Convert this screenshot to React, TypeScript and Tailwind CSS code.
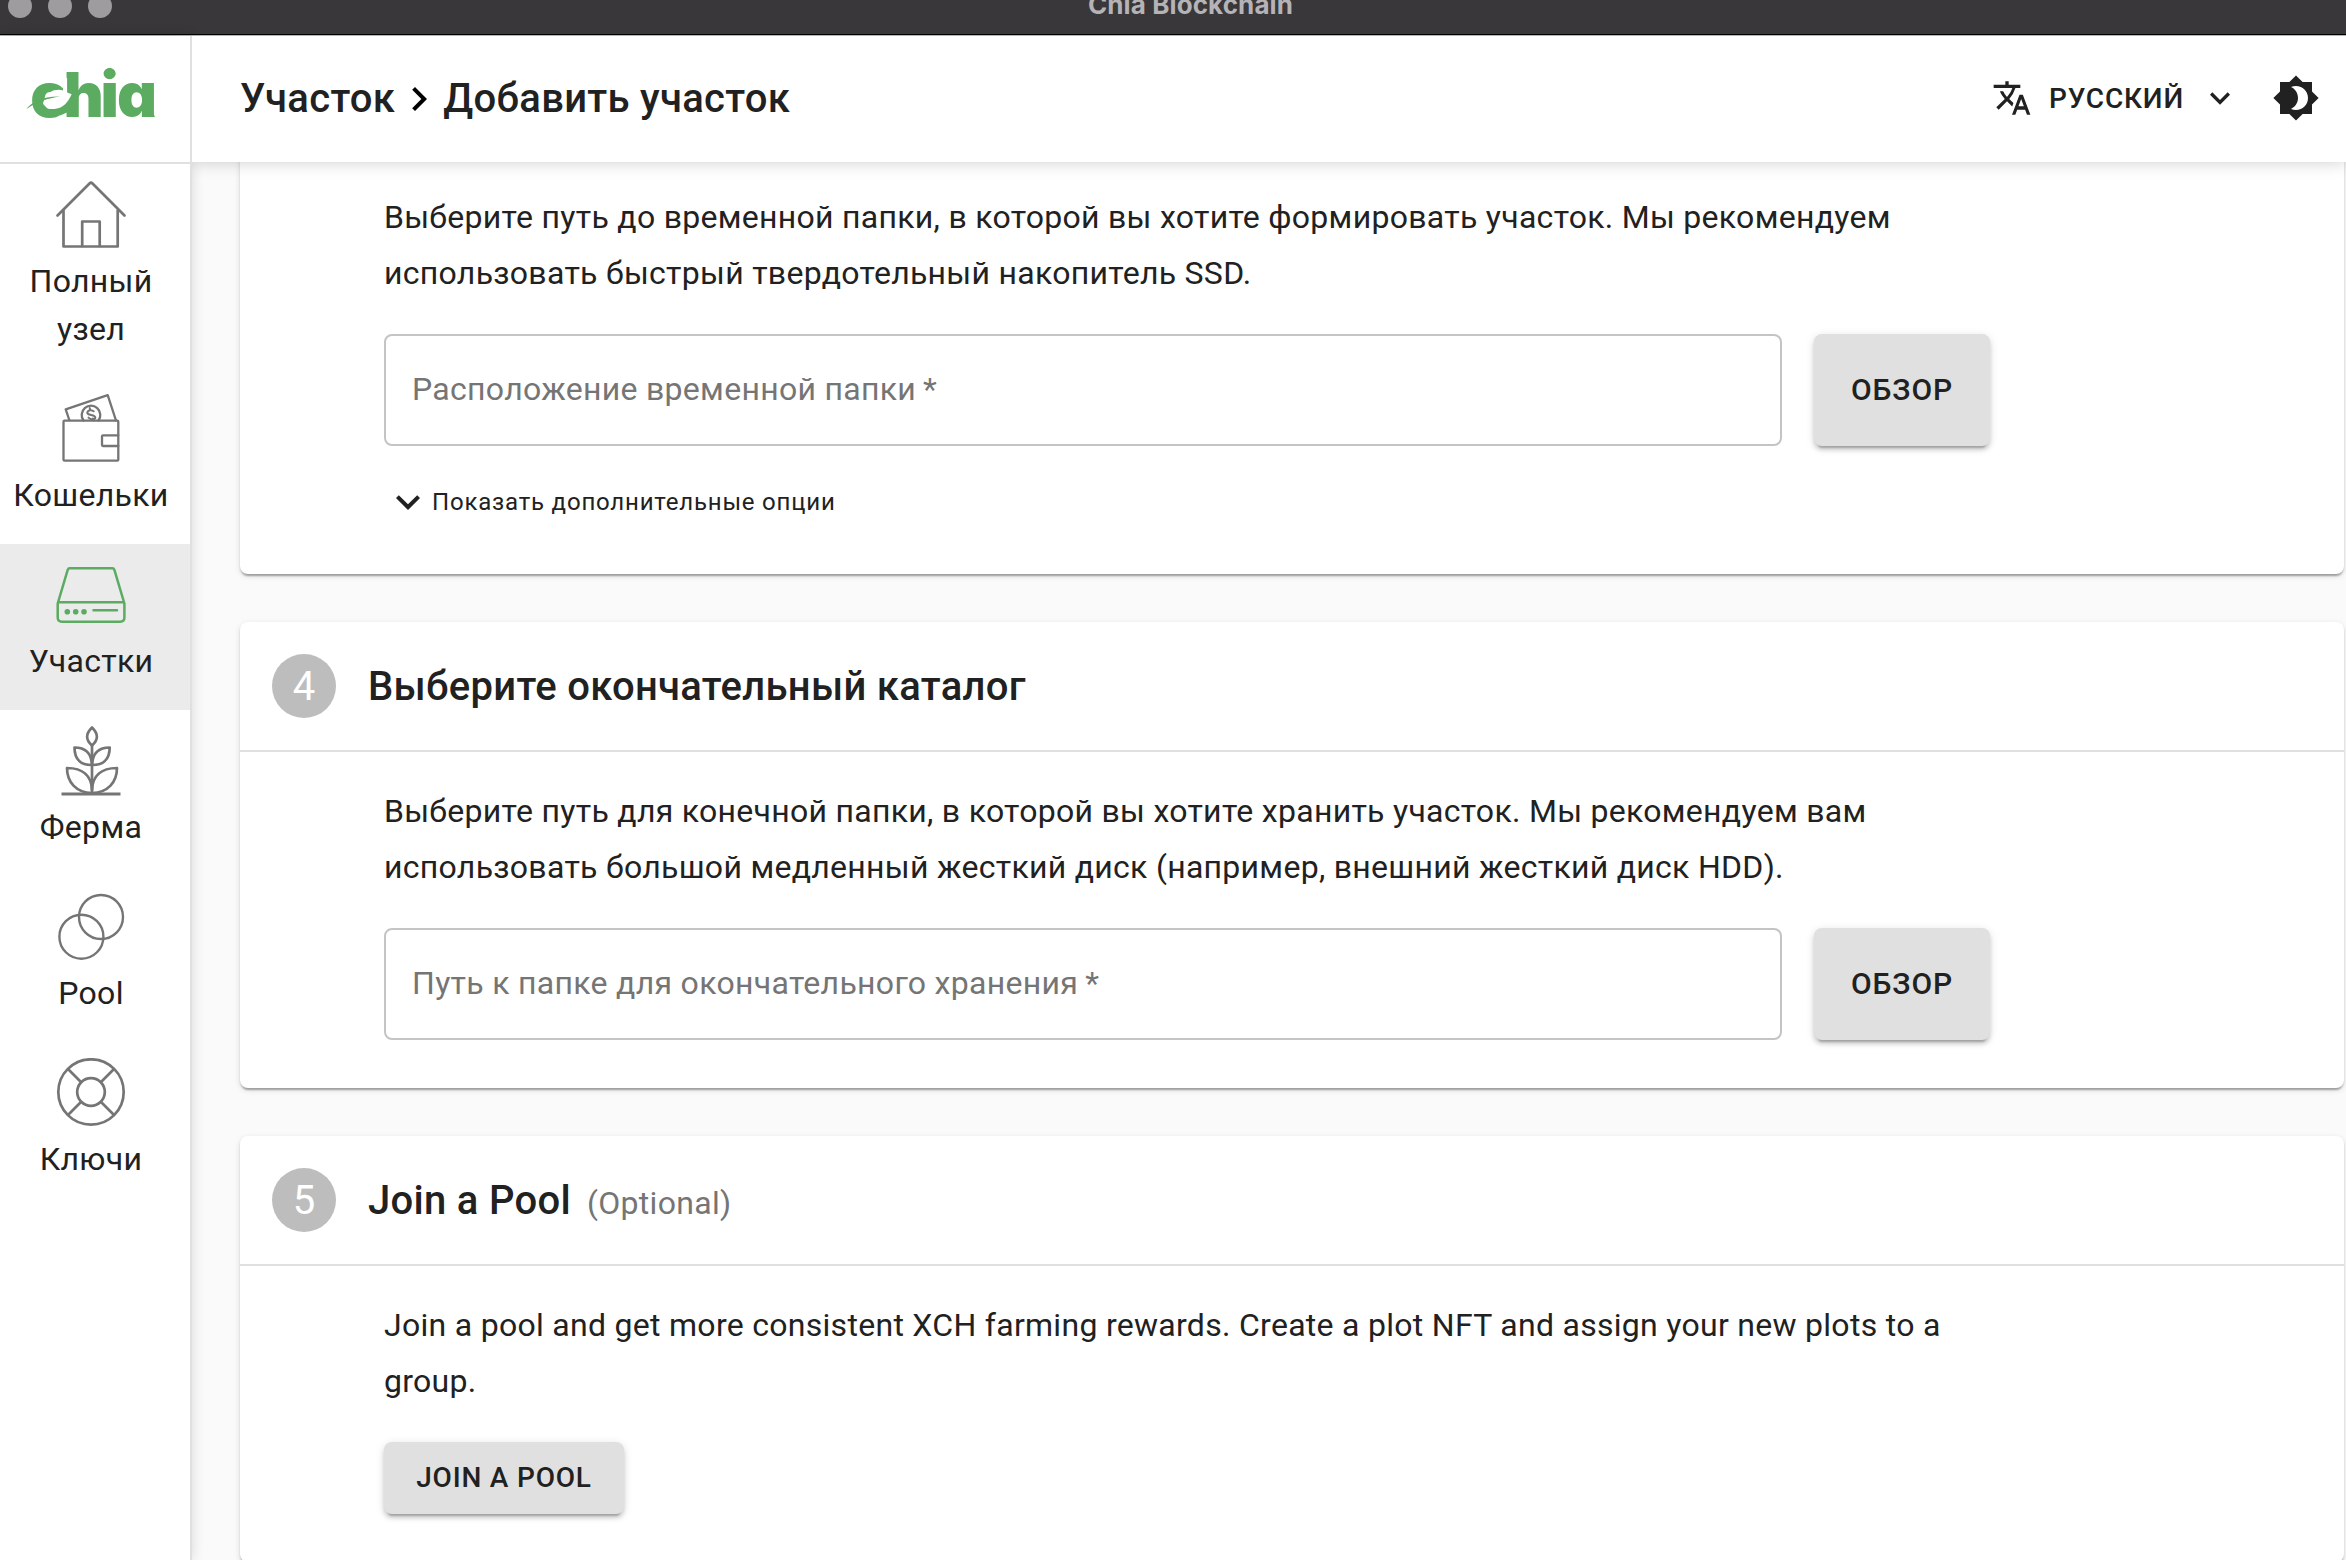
import type { ReactNode } from 'react';
import { MdBrightness4, MdChevronRight, MdExpandMore, MdTranslate } from 'react-icons/md';

function Logo() {
  return (
    <svg width="140" height="60" viewBox="22 64 140 60" className="text-[#5bab60]" fill="currentColor">
      <text
        x="30.2 63.6 100.4 117"
        y="116.7"
        fontSize="62"
        fontFamily="Inter, sans-serif"
        fontWeight="900"
        style={{ fontFeatureSettings: '"cv11"' }}
      >
        chia
      </text>
      {/* gap between the top of the c and the h */}
      <path d="M63 78H67.100V96H63Z" fill="#fff" />
      <path d="M60 102H69V116.700H67V112.500L60 115.500Z" />
      <path d="M152 110C152.500 113 153.500 115 155.300 116.700H148Z" />
      {/* leaf */}
      <path
        d="M44 100C47 92.500 53 89.500 59 89.700C63.500 90 67 92.500 71.700 94.300C69.500 98 66 108.500 54 109C49 109.200 45 107 43 103.500Z"
        fill="#fff"
      />
      <path d="M26.300 109.300C32 102 42 96.300 60 96.600C48 98.500 37 101.500 26.300 109.300Z" />
    </svg>
  );
}

function Icon({ children }: { children: ReactNode }) {
  return (
    <svg
      width="72"
      height="72"
      viewBox="0 0 72 72"
      fill="none"
      stroke="currentColor"
      strokeWidth="2.7"
      strokeLinecap="round"
      strokeLinejoin="round"
    >
      {children}
    </svg>
  );
}

function HomeIcon() {
  return (
    <Icon>
      <path d="M2.500 35.500L34.500 3.500Q36 2 37.500 3.500L69.500 35.500" />
      <path d="M8.500 30.500V66.500H62.700V30.500" />
      <path d="M27.200 66V41.500H44.700V66" />
    </Icon>
  );
}

function WalletIcon() {
  return (
    <Icon>
      <g strokeWidth="2.3">
        <rect x="8.500" y="26.700" width="54.800" height="40" rx="1" />
        <path d="M63.300 41.300H48Q47 41.300 47 42.300V51Q47 52 48 52H63.300" />
        <path d="M14.300 26L10.700 15.300L52.700 1.200L61 26.500" />
        <path d="M28.500 26.500A9.300 9.300 0 1 1 43.500 26.500" />
        <path
          d="M38.700 17.300C37 15.300 32.500 16 32.300 18.800C32.100 21.600 40.500 20.300 40.300 23.500C40.200 25.800 36 26.200 33.500 23.600M34.700 14L35.500 16.300M38 24.500L38.700 26.500"
          strokeWidth="2"
        />
      </g>
    </Icon>
  );
}

function PlotIcon() {
  return (
    <Icon>
      <g strokeWidth="2.5">
        <path d="M2.700 43.500L12.700 9.800Q13.200 8.200 14.800 8.200H57.300Q58.900 8.200 59.400 9.800L69.400 43.500V57.500Q69.400 61.700 65.200 61.700H6.900Q2.700 61.700 2.700 57.500Z" />
        <path d="M3.500 42.200H68.500M38.500 50.300H62" />
      </g>
      <g fill="currentColor" stroke="none">
        <circle cx="12.300" cy="51.700" r="2.800" />
        <circle cx="20.700" cy="51.700" r="2.800" />
        <circle cx="29" cy="51.700" r="2.800" />
      </g>
    </Icon>
  );
}

function FarmIcon() {
  return (
    <Icon>
      <path d="M37 1.500C30.500 8 30.500 13.500 37 19.500C43.500 13.500 43.500 8 37 1.500Z" />
      <path d="M37 19.500V67" />
      <path d="M37 39C36.500 27.500 30.500 21.500 19.500 21.500C19.500 33.500 26 39.300 37 39ZM37 39C37.500 27.500 43.500 21.500 54.700 21.500C54.700 33.500 48 39.300 37 39Z" />
      <path d="M37 64C36.500 50 28 42 12 42C12 56 21 66.500 37 67C53 66.500 62 56 62 42C46 42 37.500 50 37 64Z" />
      <path d="M6.500 68H65.500" strokeLinecap="butt" strokeWidth="3.200" />
    </Icon>
  );
}

function PoolIcon() {
  return (
    <Icon>
      <circle cx="46" cy="25" r="22" strokeWidth="2.400" />
      <circle cx="26.400" cy="44.700" r="22" strokeWidth="2.400" />
    </Icon>
  );
}

function KeysIcon() {
  return (
    <Icon>
      <circle cx="36" cy="34" r="32.700" />
      <circle cx="36" cy="34" r="13.800" />
      <path d="M13 11L26.200 24.200M59 11L45.800 24.200M13 57L26.200 43.800M59 57L45.800 43.800" strokeLinecap="butt" />
    </Icon>
  );
}

const menu = [
  { label: 'Полный узел', icon: <HomeIcon /> },
  { label: 'Кошельки', icon: <WalletIcon /> },
  { label: 'Участки', icon: <PlotIcon />, selected: true },
  { label: 'Ферма', icon: <FarmIcon /> },
  { label: 'Pool', icon: <PoolIcon /> },
  { label: 'Ключи', icon: <KeysIcon /> },
];

function Sidebar() {
  return (
    <aside className="z-10 flex w-[192px] shrink-0 flex-col border-r-2 border-[#e0e0e0] bg-white shadow-[0_0_12px_rgba(0,0,0,0.14)]">
      <div className="flex h-32 shrink-0 items-start border-b-2 border-[#e0e0e0] pt-7 pl-[22px]">
        <Logo />
      </div>
      <nav>
        {menu.map((item) => (
          <a
            key={item.label}
            className={
              item.selected
                ? 'flex flex-col items-center bg-[#ebebeb] pt-4 pr-2 pb-[25px] text-[#5bab60]'
                : 'flex flex-col items-center pt-4 pr-2 pb-[25px] text-[#757575]'
            }
          >
            {item.icon}
            <span className="mt-[5px] max-w-[170px] text-center text-[32px] leading-[48px] tracking-[0.00938em] text-[#212121]">
              {item.label}
            </span>
          </a>
        ))}
      </nav>
    </aside>
  );
}

function Header() {
  return (
    <header className="z-20 flex h-[126px] shrink-0 items-center bg-white pr-[26px] pl-12 shadow-[0_0_16px_rgba(0,0,0,0.2)] [clip-path:inset(0_0_-24px_0)]">
      <h1 className="flex items-center text-[40px] leading-[64px] font-medium tracking-[0.0075em]">
        Участок
        <MdChevronRight size={48} className="text-black" />
        Добавить участок
      </h1>
      <button className="mb-0.5 ml-auto flex items-center text-[28px] leading-[49px] font-medium tracking-[0.02857em]">
        <MdTranslate size={40} />
        <span className="ml-[17px]">РУССКИЙ</span>
        <MdExpandMore size={40} className="ml-4" />
      </button>
      <MdBrightness4 size={48} className="mb-0.5 ml-8" />
    </header>
  );
}

function CardHeader({ step, title, note }: { step: number; title: string; note?: string }) {
  return (
    <div className="flex h-[130px] items-center gap-8 border-b-2 border-[#e0e0e0] px-8">
      <span className="flex size-16 items-center justify-center rounded-full bg-[#bdbdbd] pt-px text-[40px] text-white">
        {step}
      </span>
      <h2 className="pt-0.5 text-[40px] leading-[64px] font-medium tracking-[0.0075em]">
        {title}
        {note && (
          <span className="ml-4 text-[32px] leading-[48px] font-normal tracking-[0.00938em] text-[#757575]">
            {note}
          </span>
        )}
      </h2>
    </div>
  );
}

function Card({ children }: { children: ReactNode }) {
  return (
    <section className="shrink-0 rounded-lg bg-white shadow-[0_4px_2px_-2px_rgba(0,0,0,0.2),0_2px_2px_0_rgba(0,0,0,0.14),0_2px_6px_0_rgba(0,0,0,0.12)]">
      {children}
    </section>
  );
}

function Description({ children }: { children: ReactNode }) {
  return <p className="text-[32px] leading-[56px] tracking-[0.009em]">{children}</p>;
}

function FolderField({ label }: { label: string }) {
  return (
    <div className="mt-[33px] flex h-28 gap-8">
      <div className="flex w-[1398px] items-center rounded-lg border-2 border-[#c4c4c4] px-[26px] pb-0.5 text-[32px] tracking-[0.00938em] text-[#757575]">
        {label}
        <span className="ml-[7px]">*</span>
      </div>
      <button className="w-[176px] rounded-lg bg-[#e0e0e0] pb-0.5 text-[30px] font-medium tracking-[0.02857em] shadow-[0_6px_2px_-4px_rgba(0,0,0,0.2),0_4px_4px_0_rgba(0,0,0,0.14),0_2px_10px_0_rgba(0,0,0,0.12)]">
        ОБЗОР
      </button>
    </div>
  );
}

export default function App() {
  return (
    <div className="flex h-[1560px] w-[2346px] flex-col overflow-hidden bg-[#fafafa] font-['Roboto',sans-serif] text-[#212121]">
      {/* Window title bar */}
      <div className="relative h-9 shrink-0 border-b border-[#b5b5b5] bg-[#39373a]">
        <div className="flex h-[35px] justify-center border-b border-black pl-[35px]">
          <span className="-mt-[11px] font-['Inter',sans-serif] text-[26px] leading-8 font-bold tracking-[0.1px] text-[#b5b3b6]">
            Chia Blockchain
          </span>
        </div>
        <div className="absolute -top-1.5 left-2 flex gap-4">
          <span className="size-6 rounded-full bg-[#9e9c9e]" />
          <span className="size-6 rounded-full bg-[#9e9c9e]" />
          <span className="size-6 rounded-full bg-[#9e9c9e]" />
        </div>
      </div>

      <div className="flex min-h-0 flex-1">
        <Sidebar />

        <div className="flex min-w-0 flex-1 flex-col">
          <Header />

          <main className="flex min-h-0 flex-1 flex-col gap-12 overflow-hidden pr-0.5 pl-12">
            {/* Temporary directory */}
            <div className="-mt-4 flex flex-col">
              <Card>
                <div className="h-[428px] px-36 pt-[43px]">
                  <Description>
                    Выберите путь до временной папки, в которой вы хотите формировать участок. Мы рекомендуем
                    <br />
                    использовать быстрый твердотельный накопитель SSD.
                  </Description>
                  <FolderField label="Расположение временной папки" />
                  <button className="mt-8 flex h-12 items-center text-[24px] tracking-[0.03333em]">
                    <MdExpandMore size={48} />
                    Показать дополнительные опции
                  </button>
                </div>
              </Card>
            </div>

            {/* Final directory */}
            <Card>
              <CardHeader step={4} title="Выберите окончательный каталог" />
              <div className="px-36 pt-[31px] pb-12">
                <Description>
                  Выберите путь для конечной папки, в которой вы хотите хранить участок. Мы рекомендуем вам
                  <br />
                  использовать большой медленный жесткий диск (например, внешний жесткий диск HDD).
                </Description>
                <FolderField label="Путь к папке для окончательного хранения" />
              </div>
            </Card>

            {/* Pool */}
            <Card>
              <CardHeader step={5} title="Join a Pool" note="(Optional)" />
              <div className="px-36 pt-[31px] pb-12">
                <Description>
                  Join a pool and get more consistent XCH farming rewards. Create a plot NFT and assign your new plots to a
                  <br />
                  group.
                </Description>
                <button className="mt-[33px] h-[72px] w-[240px] rounded-lg bg-[#e0e0e0] text-[28px] font-medium tracking-[0.02857em] shadow-[0_6px_2px_-4px_rgba(0,0,0,0.2),0_4px_4px_0_rgba(0,0,0,0.14),0_2px_10px_0_rgba(0,0,0,0.12)]">
                  JOIN A POOL
                </button>
              </div>
            </Card>
          </main>
        </div>
      </div>
    </div>
  );
}
